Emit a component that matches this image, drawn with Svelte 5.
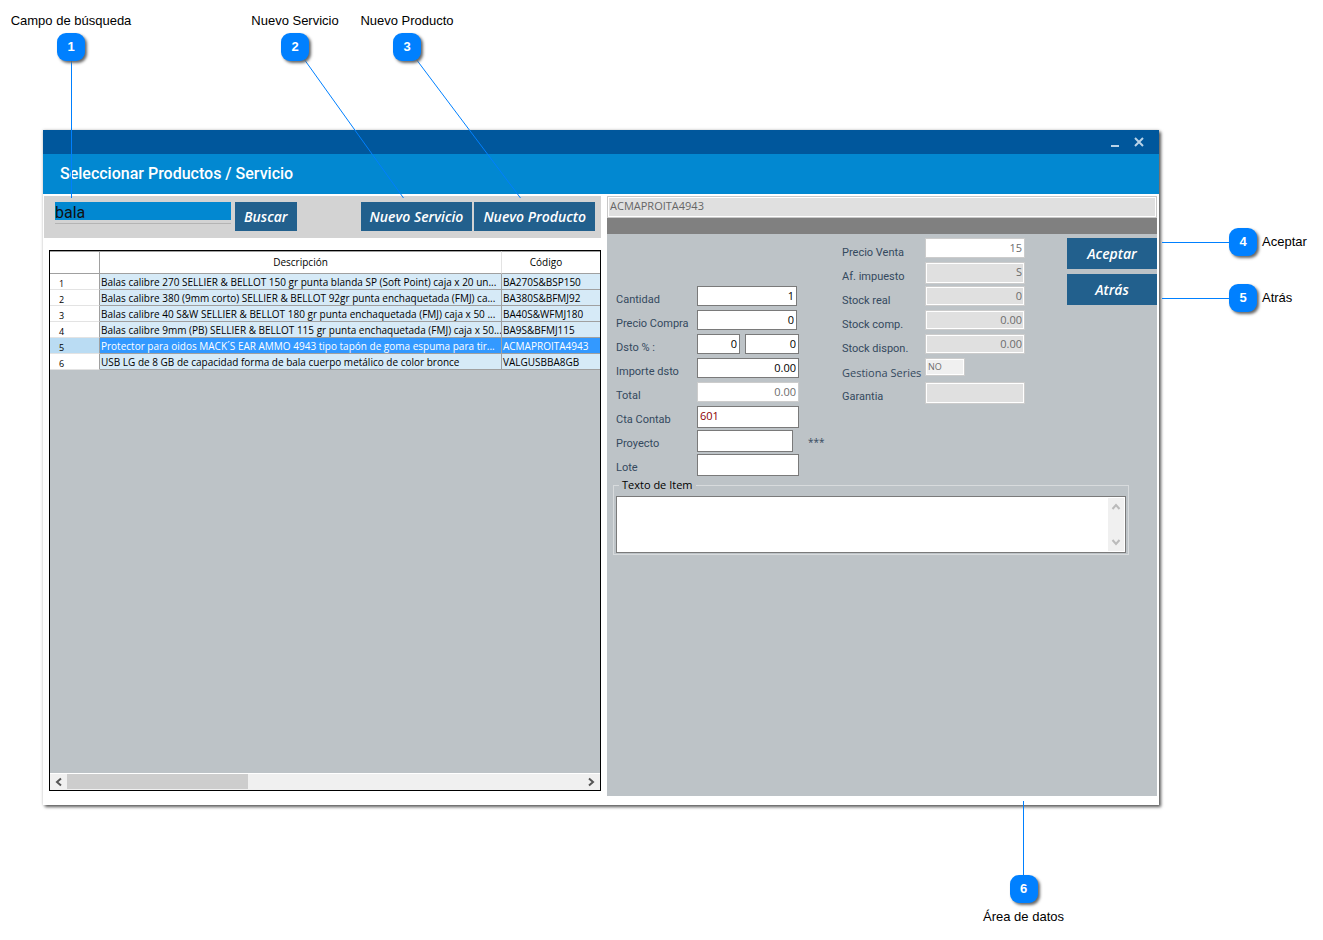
<script>
  const rows = [
    ['Balas calibre 270 SELLIER & BELLOT 150 gr punta blanda SP (Soft Point) caja x 20 un...', 'BA270S&BSP150'],
    ['Balas calibre 380 (9mm corto) SELLIER & BELLOT 92gr punta enchaquetada (FMJ) ca...', 'BA380S&BFMJ92'],
    ['Balas calibre 40 S&W SELLIER & BELLOT 180 gr punta enchaquetada (FMJ) caja x 50 ...', 'BA40S&WFMJ180'],
    ['Balas calibre 9mm (PB) SELLIER & BELLOT 115 gr punta enchaquetada (FMJ) caja x 50...', 'BA9S&BFMJ115'],
    ['Protector para oidos MACK´S EAR AMMO 4943 tipo tapón de goma espuma para tir...', 'ACMAPROITA4943'],
    ['USB LG de 8 GB de capacidad forma de bala cuerpo metálico de color bronce', 'VALGUSBBA8GB'],
  ];
  let selected = $state(4);

  const entry = [
    { id: 'cantidad', label: 'Cantidad', value: '1', kind: 'num mid' },
    { id: 'compra', label: 'Precio Compra', value: '0', kind: 'num mid' },
    { id: 'dsto', label: 'Dsto % :', value: '0', kind: 'num tiny', second: '0' },
    { id: 'importe', label: 'Importe dsto', value: '0.00', kind: 'num' },
    { id: 'total', label: 'Total', value: '0.00', kind: 'num soft' },
    { id: 'cta', label: 'Cta Contab', value: '601', kind: 'tall account' },
    { id: 'proyecto', label: 'Proyecto', value: '', kind: 'tall short', stars: true },
    { id: 'lote', label: 'Lote', value: '', kind: 'tall' },
  ];
  const info = [
    { id: 'venta', label: 'Precio Venta', value: '15', kind: 'num soft' },
    { id: 'impuesto', label: 'Af. impuesto', value: 'S', kind: 'num off tall' },
    { id: 'real', label: 'Stock real', value: '0', kind: 'num off' },
    { id: 'comp', label: 'Stock comp.', value: '0.00', kind: 'num off' },
    { id: 'dispon', label: 'Stock dispon.', value: '0.00', kind: 'num off' },
    { id: 'series', label: 'Gestiona Series', value: 'NO', kind: 'flag', wide: true },
    { id: 'garantia', label: 'Garantia', value: '', kind: 'off tall' },
  ];
</script>

<main>
  <section class="window">
    <div class="titlebar">
      <button aria-label="Minimizar"><svg width="10" height="10" viewBox="0 0 10 10"><path d="M1 9h8" stroke-width="2" /></svg></button>
      <button aria-label="Cerrar"><svg width="10" height="10" viewBox="0 0 10 10"><path d="M1 1l8 8M9 1l-8 8" stroke-width="2" /></svg></button>
    </div>
    <h1>Seleccionar Productos / Servicio</h1>

    <div class="content">
      <div class="left">
        <div class="toolbar">
          <div class="search"><input aria-label="Campo de búsqueda" value="bala" /></div>
          <button class="action">Buscar</button>
          <div class="new">
            <button class="action">Nuevo Servicio</button>
            <button class="action">Nuevo Producto</button>
          </div>
        </div>

        <div class="listing">
          <table>
            <thead>
              <tr><th class="idx"></th><th>Descripción</th><th class="code">Código</th></tr>
            </thead>
            <tbody>
              {#each rows as [text, code], i}
                <tr class:sel={i === selected} onclick={() => (selected = i)}>
                  <td class="idx">{i + 1}</td><td>{text}</td><td>{code}</td>
                </tr>
              {/each}
            </tbody>
          </table>
          <div class="hscroll">
            <svg width="17" height="16" viewBox="0 0 17 16"><path d="M11 4.500l-4 3.500l4 3.500" /></svg>
            <div class="track"><div class="thumb"></div></div>
            <svg width="17" height="16" viewBox="0 0 17 16"><path d="M6 4.500l4 3.500l-4 3.500" /></svg>
          </div>
        </div>
      </div>

      <div class="right">
        <input class="head" aria-label="Código del producto" value="ACMAPROITA4943" readonly />
        <div class="band"></div>
        <div class="form">
          <div class="entry">
            {#each entry as f}
              <div class="row">
                <label for={f.id}>{f.label}</label>
                <input id={f.id} class={f.kind} value={f.value} />
                {#if f.second}<input class="num pair" aria-label="Dsto importe" value={f.second} />{/if}
                {#if f.stars}<span class="stars">***</span>{/if}
              </div>
            {/each}
          </div>
          <div class="info">
            {#each info as f}
              <div class="row">
                <label for={f.id} class:wide={f.wide}>{f.label}</label>
                <input id={f.id} class={f.kind} value={f.value} readonly />
              </div>
            {/each}
          </div>
          <div class="confirm">
            <button class="action">Aceptar</button>
            <button class="action">Atrás</button>
          </div>
        </div>
        <fieldset>
          <legend>Texto de Item</legend>
          <div class="memo">
            <textarea aria-label="Texto de Item"></textarea>
            <div class="vscroll">
              <svg width="16" height="17" viewBox="0 0 16 17"><path d="M4.500 11l3.500-4l3.500 4" /></svg>
              <svg width="16" height="17" viewBox="0 0 16 17"><path d="M4.500 6l3.500 4l3.500-4" /></svg>
            </div>
          </div>
        </fieldset>
      </div>
    </div>
  </section>

  <svg class="lines top" width="540" height="200" viewBox="0 0 540 200">
    <path d="M71.500 60V198M304 59L403.500 198M416 59L520.500 198" />
  </svg>
  <svg class="lines side" width="70" height="60" viewBox="0 0 70 60"><path d="M0 2.500H68M0 58.500H68" /></svg>
  <svg class="lines foot" width="3" height="76" viewBox="0 0 3 76"><path d="M1.500 0V76" /></svg>

  <div class="note above c1"><span>Campo de búsqueda</span><b>1</b></div>
  <div class="note above c2"><span>Nuevo Servicio</span><b>2</b></div>
  <div class="note above c3"><span>Nuevo Producto</span><b>3</b></div>
  <div class="note beside c4"><b>4</b><span>Aceptar</span></div>
  <div class="note beside c5"><b>5</b><span>Atrás</span></div>
  <div class="note c6"><b>6</b><span>Área de datos</span></div>
</main>

<style>
  :global(body) { margin: 0; background: #fff; }
  * { box-sizing: border-box; }
  main {
    position: relative;
    display: flex;
    min-height: 100vh;
    padding: 130px 164px 135px 43px;
    font-family: 'Open Sans', 'Noto Sans', sans-serif;
  }
  button, input, textarea { font: inherit; margin: 0; border: 0; border-radius: 0; padding: 0; outline: 0; }
  .window {
    flex: 1;
    min-width: 0;
    display: flex;
    flex-direction: column;
    background: #fff;
    box-shadow: 2px 2px 3px 0 #5c5c5c, 0 0 3px #ccc;
  }
  .titlebar { display: flex; justify-content: flex-end; gap: 14px; height: 24px; padding: 0 15px; background: #00579c; }
  .titlebar button { display: flex; align-items: center; background: none; }
  .titlebar path { stroke: #b9d3e8; fill: none; }
  h1 {
    margin: 0;
    height: 40px;
    padding-left: 17px;
    background: #0288d1;
    color: #fff;
    font: 500 16px/39px Roboto, sans-serif;
  }
  .content {
    flex: 1;
    display: grid;
    grid-template-columns: minmax(0, 557fr) minmax(0, 550fr);
    gap: 6px;
    padding: 2px 2px 9px 1px;
  }
  .left { display: flex; flex-direction: column; padding-bottom: 5px; }
  .toolbar { display: flex; gap: 4px; height: 42px; padding: 6px 6px 0 11px; background: #d3d3d3; }
  .search { flex: 0 1 176px; height: 22px; border-bottom: 1px solid #b4b4b4; }
  .search input { display: block; width: 100%; height: 18px; padding-top: 2px; background: #0288d1; color: #111; font: 16px/16px Roboto, sans-serif; }
  .action { height: 29px; padding: 0 9px; background: #22608d; color: #fff; font-size: 14px; font-weight: 600; font-style: italic; white-space: nowrap; }
  .new { display: flex; gap: 2px; margin-left: auto; }
  .listing { flex: 1; display: flex; flex-direction: column; margin: 12px 0 0 5px; border: 1px solid #000; background: #bdc3c7; }
  table { width: 100%; table-layout: fixed; border-spacing: 0; font-size: 10px; font-weight: 500; line-height: 13px; color: #000; }
  th { height: 23px; padding: 0; border-top: 1px solid #a0a0a0; border-right: 1px solid #e3e3e3; border-bottom: 1px solid #a0a0a0; background: #fff; font-weight: 500; }
  td { height: 16px; padding: 2px 0 0 1px; border-right: 1px solid #a0a0a0; border-bottom: 1px solid #a0a0a0; background: #d6eaf7; white-space: nowrap; overflow: hidden; }
  .idx { width: 50px; border-right-color: #a0a0a0; }
  td.idx { padding: 4px 0 0 9px; line-height: 11px; border-bottom-color: #e3e3e3; background: #fff; font-size: 9px; }
  .code { width: 98px; padding-right: 10px; }
  tr > :last-child { border-right: 0; }
  .sel td { background: #3399ff; color: #fff; }
  .sel td.idx { background: #badcf3; color: #000; }
  .hscroll { display: flex; height: 17px; margin-top: auto; border-top: 1px solid #fff; background: #f0f0f0; }
  .track { flex: 1; }
  .thumb { width: 35%; height: 15px; background: #cdcdcd; }
  .hscroll path { fill: none; stroke: #555; stroke-width: 2; }

  .right { background: #bdc3c7; }
  .head { display: block; width: 100%; height: 22px; border: 1px solid #c8c8c8; box-shadow: inset 0 0 0 1px #fff; padding: 0 2px 3px; background: #e0e0e0; color: #666; font: 11px/17px 'Open Sans', sans-serif; }
  .band { height: 16px; background: #808080; }
  .form { display: flex; padding: 4px 0 0 9px; font-size: 11px; color: #34495e; }
  .entry { flex: 0 0 226px; padding-top: 48px; }
  .row { display: flex; height: 24px; }
  .row label { flex: 0 0 81px; padding-top: 6px; font: 11px/16px Roboto, sans-serif; white-space: nowrap; }
  .info .row label { flex-basis: 83px; padding-top: 7px; }
  .info .row label.wide { font: 500 11px/16px 'Open Sans', sans-serif; }
  .row input { width: 102px; height: 20px; border: 1px solid #7a7a7a; padding: 0 2px 1px; background: #fff; color: #000; line-height: 17px; }
  .row .num { text-align: right; }
  .row .mid { width: 100px; }
  .row .tiny { width: 43px; }
  .row .pair { width: 54px; margin-left: 5px; }
  .row .short { width: 96px; }
  .row .tall { height: 22px; padding-bottom: 3px; }
  .row .account { color: #8b0000; }
  .row .soft { border-color: #ccc; color: #6d6d6d; }
  .info .row input { width: 100px; }
  .row .off { border-color: #ccc; box-shadow: inset 0 0 0 1px #fff; background: #e0e0e0; color: #6d6d6d; }
  .info .row .flag { width: 40px; height: 18px; border-color: #ccc; box-shadow: inset 0 0 0 1px #fff; background: #f0f0f0; color: #6d6d6d; font-size: 9px; }
  .stars { margin-left: 15px; padding-top: 4px; font-size: 10px; line-height: 16px; }
  .confirm { display: flex; flex-direction: column; gap: 5px; width: 90px; margin-left: auto; }
  .confirm .action { height: 31px; }
  fieldset { margin: 0 28px 0 6px; padding: 4px 2px 1px; border: 1px solid #d8dbdd; }
  legend { margin-left: 3px; padding: 0 3px; font-size: 11px; font-weight: 500; line-height: 14px; color: #000; }
  .memo { display: flex; height: 57px; border: 1px solid #7a7a7a; background: #fff; padding: 1px; }
  textarea { flex: 1; resize: none; background: #fff; font-size: 11px; }
  .vscroll { display: flex; flex-direction: column; justify-content: space-between; width: 16px; background: #f0f0f0; }
  .vscroll path { fill: none; stroke: #bbb; stroke-width: 2; }

  .lines { position: absolute; fill: none; stroke: #0080ff; pointer-events: none; }
  .top { left: 0; top: 0; }
  .side { right: 91px; top: 240px; }
  .foot { right: 298px; bottom: 63px; }
  .note { position: absolute; display: flex; flex-direction: column; align-items: center; gap: 4px; font: 13px/16px 'Liberation Sans', sans-serif; color: #000; white-space: nowrap; }
  .note b { display: block; width: 28px; height: 28px; border-radius: 9px; background: #0080ff; box-shadow: 2px 2px 3px #666; color: #fff; font: bold 13px/28px 'Liberation Sans', sans-serif; text-align: center; }
  .above { top: 13px; width: 140px; }
  .beside { flex-direction: row; gap: 5px; }
  .c1 { left: 1px; }
  .c2 { left: 225px; }
  .c3 { left: 337px; }
  .c4 { left: calc(100% - 94px); top: 228px; }
  .c5 { left: calc(100% - 94px); top: 284px; }
  .c6 { right: 259px; bottom: 15px; gap: 6px; }
</style>
